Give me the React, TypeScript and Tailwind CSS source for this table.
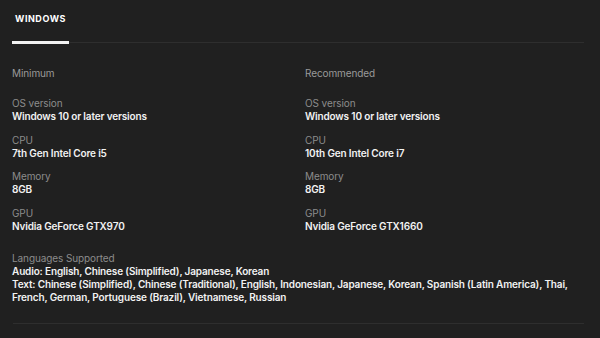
import React from "react";

type Spec = { label: string; value: string };

const minimum: Spec[] = [
  { label: "OS version", value: "Windows 10 or later versions" },
  { label: "CPU", value: "7th Gen Intel Core i5" },
  { label: "Memory", value: "8GB" },
  { label: "GPU", value: "Nvidia GeForce GTX970" },
];

const recommended: Spec[] = [
  { label: "OS version", value: "Windows 10 or later versions" },
  { label: "CPU", value: "10th Gen Intel Core i7" },
  { label: "Memory", value: "8GB" },
  { label: "GPU", value: "Nvidia GeForce GTX1660" },
];

function Column({ title, specs }: { title: string; specs: Spec[] }) {
  return (
    <div className="flex flex-col">
      <div className="text-[#9a9a9a] leading-[13px]">{title}</div>
      <div className="mt-[17px] flex flex-col gap-[10.5px]">
        {specs.map((s) => (
          <div key={s.label} className="flex flex-col">
            <div className="text-[#8c8c8c] leading-[13px]">{s.label}</div>
            <div className="text-[#f2f2f2] font-semibold tracking-[-0.015em] leading-[13px]">
              {s.value}
            </div>
          </div>
        ))}
      </div>
    </div>
  );
}

export default function App() {
  return (
    <div
      className="w-[600px] h-[338px] bg-[#202020] overflow-hidden text-[10px] tracking-[-0.01em]"
      style={{ fontFamily: "Inter, 'Noto Sans', sans-serif" }}
    >
      <div className="pl-3 pr-4">
        {/* tab strip */}
        <div className="flex border-b border-[#2e2e2e] pt-[13px]">
          <div className="w-[57px] -mb-[2px] border-b-[3px] border-[#f2f2f2] pb-[16px]">
            <span className="text-[9px] font-bold tracking-[0.06em] text-white leading-[12px] block pl-[3px]">
              WINDOWS
            </span>
          </div>
        </div>

        <div className="mt-[24px] grid grid-cols-[293px_1fr]">
          <Column title="Minimum" specs={minimum} />
          <Column title="Recommended" specs={recommended} />
        </div>

        <div className="mt-[19px] pr-[2px]">
          <div className="text-[#8c8c8c] leading-[13px]">Languages Supported</div>
          <div className="text-[#f2f2f2] font-semibold tracking-[-0.015em] leading-[13px]">
            Audio: English, Chinese (Simplified), Japanese, Korean
          </div>
          <div className="text-[#f2f2f2] font-semibold tracking-[-0.015em] leading-[13px]">
            Text: Chinese (Simplified), Chinese (Traditional), English, Indonesian, Japanese, Korean, Spanish (Latin America), Thai, French, German, Portuguese (Brazil), Vietnamese, Russian
          </div>
        </div>

        <div className="mt-[19px] ml-[1px] border-t border-[#2e2e2e]" />
      </div>
    </div>
  );
}
